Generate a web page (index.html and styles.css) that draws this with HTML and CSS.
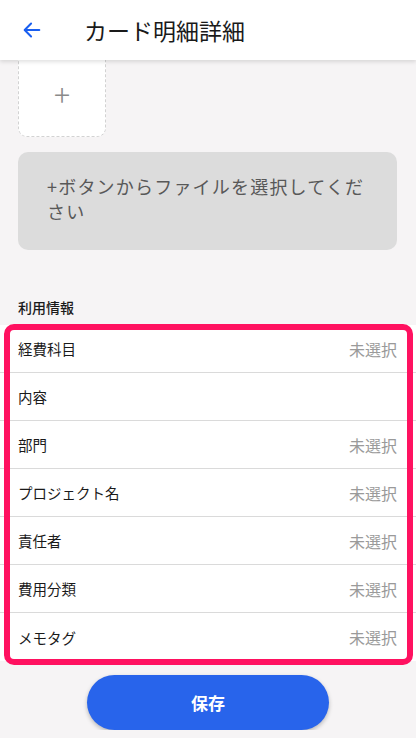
FILE: index.html
```html
<!DOCTYPE html>
<html lang="ja">
<head>
  <meta charset="UTF-8" />
  <meta name="viewport" content="width=device-width, initial-scale=1.0"/>
  <title>カード明細詳細</title>
  <link rel="stylesheet" href="styles.css">
</head>
<body>
  <header class="topbar">
    <button class="back" type="button" aria-label="戻る">
      <svg width="22" height="22" viewBox="0 0 24 24" fill="none" stroke="#1a5ff0" stroke-width="2.2" stroke-linecap="round" stroke-linejoin="round">
        <path d="M20 12H4.5"/>
        <path d="M11 5l-7 7 7 7"/>
      </svg>
    </button>
    <h1>カード明細詳細</h1>
  </header>

  <main class="content">
    <div class="upload-tile">+</div>

    <div class="empty-note">+ボタンからファイルを選択してください</div>

    <h2 class="section-title">利用情報</h2>

    <div class="info-list">
      <div class="info-row"><span>経費科目</span><span class="value">未選択</span></div>
      <div class="info-row"><span>内容</span></div>
      <div class="info-row"><span>部門</span><span class="value">未選択</span></div>
      <div class="info-row"><span>プロジェクト名</span><span class="value">未選択</span></div>
      <div class="info-row"><span>責任者</span><span class="value">未選択</span></div>
      <div class="info-row"><span>費用分類</span><span class="value">未選択</span></div>
      <div class="info-row"><span>メモタグ</span><span class="value">未選択</span></div>
    </div>

    <div class="actions">
      <button class="save" type="button">保存</button>
    </div>
  </main>
</body>
</html>
```

FILE: styles.css
```css
body {
  font-family: "Noto Sans CJK JP", "Noto Sans", sans-serif;
  background: #f6f4f5;
  margin: 0;
  padding: 0;
  overflow: hidden;
}
.topbar {
  position: relative;
  z-index: 2;
  height: 60px;
  background: #fff;
  display: flex;
  align-items: center;
  box-shadow: 0 2px 4px rgba(0,0,0,0.12);
}
.back {
  border: none;
  background: none;
  padding: 0;
  margin-left: 21px;
  width: 22px;
  height: 22px;
  display: flex;
}
.topbar h1 {
  margin: 0 0 0 41px;
  font-size: 23px;
  font-weight: 400;
  color: #1a1a1a;
  line-height: 1;
}
.content {
  position: relative;
  z-index: 1;
}
.upload-tile {
  width: 86px;
  height: 86px;
  margin: -11px 0 0 18px;
  background: #fff;
  border: 1px dashed #d2d2d2;
  border-radius: 9px;
  display: flex;
  align-items: center;
  justify-content: center;
  font-size: 30px;
  font-weight: 300;
  color: #8a8a8a;
  line-height: 1;
}
.empty-note {
  margin: 15px 19px 0 18px;
  background: #dcdcdc;
  border-radius: 10px;
  padding: 22px 30px 25px 29px;
  font-size: 18px;
  letter-spacing: 1.2px;
  line-height: 25px;
  color: #585858;
  height: 51px;
}
.section-title {
  margin: 48px 0 0 18px;
  font-size: 14px;
  font-weight: 500;
  color: #1a1a1a;
  line-height: 18px;
}
.info-list {
  position: relative;
  margin-top: 9px;
  background: #fff;
}
.info-list::after {
  content: "";
  position: absolute;
  top: -1px;
  left: 4px;
  right: 3px;
  bottom: -4px;
  border: 6px solid #ff1160;
  border-radius: 10px;
  pointer-events: none;
}
.info-row {
  height: 47px;
  display: flex;
  align-items: center;
  justify-content: space-between;
  padding: 0 19px 0 18px;
  border-bottom: 1px solid #dadada;
  font-size: 14.5px;
  color: #1a1a1a;
}
.info-row:last-child {
  border-bottom: none;
  height: 48px;
}
.info-row .value {
  font-size: 16px;
  color: #9a9a9a;
}
.actions {
  display: flex;
  justify-content: center;
  padding-top: 14px;
}
.save {
  width: 242px;
  height: 55px;
  border: none;
  border-radius: 28px;
  background: #2864eb;
  color: #fff;
  font-family: inherit;
  font-size: 17px;
  font-weight: 700;
  box-shadow: 0 2px 4px rgba(0,0,0,0.25);
}
```
